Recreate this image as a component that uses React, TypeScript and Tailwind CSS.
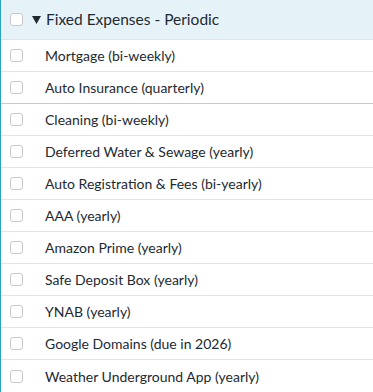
import React from "react";

const items = [
  "Mortgage (bi-weekly)",
  "Auto Insurance (quarterly)",
  "Cleaning (bi-weekly)",
  "Deferred Water & Sewage (yearly)",
  "Auto Registration & Fees (bi-yearly)",
  "AAA (yearly)",
  "Amazon Prime (yearly)",
  "Safe Deposit Box (yearly)",
  "YNAB (yearly)",
  "Google Domains (due in 2026)",
  "Weather Underground App (yearly)",
];

function Box() {
  return <div className="w-[13px] h-[13px] rounded-[3px] border border-[#c8c8c8] bg-white shrink-0" />;
}

export default function App() {
  return (
    <div className="w-[373px] h-[392px] overflow-hidden bg-white border-l border-[#2aa3bd]" style={{ fontFamily: "Lato, 'Liberation Sans', sans-serif" }}>
      <div className="h-[40px] bg-[#e5f3f9] border-b border-[#dde3e6] flex items-center pl-[9px]">
        <Box />
        <svg width="9" height="8" viewBox="0 0 9 8" className="ml-[9px] mt-[1px] shrink-0">
          <path d="M0 0 H9 L4.5 8 Z" fill="#1f2a30" />
        </svg>
        <span className="ml-[5px] text-[15.5px] text-[#1f2a30]">Fixed Expenses - Periodic</span>
      </div>
      {items.map((t, i) => (
        <div
          key={t}
          className={`h-[32px] flex items-center pl-[9px] ${i === items.length - 1 ? "" : "border-b"} ${i === 1 ? "border-[#c3cbd0]" : "border-[#e3e3e3]"}`}
        >
          <Box />
          <span className="ml-[22px] text-[14px] text-[#1e2a30]">{t}</span>
        </div>
      ))}
    </div>
  );
}
